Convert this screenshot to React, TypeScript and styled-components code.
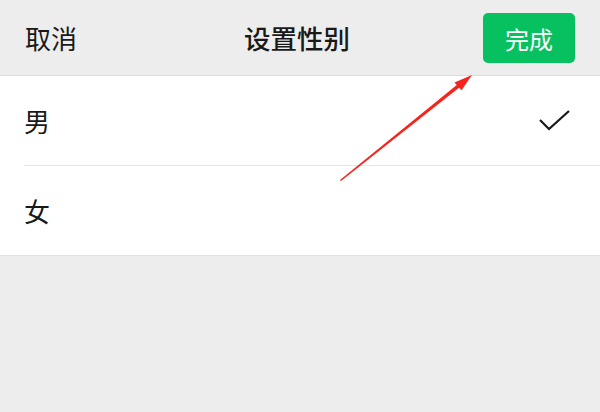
import { FC } from "react";
import styled, { createGlobalStyle } from "styled-components";

const GlobalStyle = createGlobalStyle`
  html, body {
    margin: 0;
    padding: 0;
    background: #ededed;
  }
  body {
    font-family: "Noto Sans CJK SC", "Noto Sans", sans-serif;
    color: #191919;
  }
`;

const Page = styled.div`
  position: relative;
  width: 600px;
  height: 412px;
  overflow: hidden;
  background: #ededed;
`;

const Header = styled.div`
  height: 75px;
  display: grid;
  grid-template-columns: 1fr auto 1fr;
  align-items: center;
  padding: 0 25px;
  border-bottom: 1px solid #dcdcdc;
`;

const Cancel = styled.div`
  font-size: 26px;
  justify-self: start;
`;

const Title = styled.div`
  font-size: 26.5px;
  font-weight: 500;
  margin-right: 6px;
`;

const DoneButton = styled.button`
  justify-self: end;
  width: 92px;
  height: 50px;
  margin-top: 1px;
  border: none;
  border-radius: 5px;
  background: #07c160;
  color: #fff;
  font-family: inherit;
  font-size: 24px;
  padding: 0;
`;

const List = styled.div`
  background: #fff;
  border-bottom: 1px solid #e2e2e2;
`;

const Row = styled.div<{ $divider?: boolean }>`
  height: 89px;
  margin-left: 24px;
  padding-right: 30px;
  display: flex;
  align-items: center;
  justify-content: space-between;
  font-size: 26px;
  border-top: ${(p) => (p.$divider ? "1px solid #e5e5e5" : "none")};
`;

const Annotation = styled.svg`
  position: absolute;
  left: 0;
  top: 0;
  pointer-events: none;
`;

const CheckIcon: FC = () => (
  <svg width="32" height="24" viewBox="0 0 32 24">
    <path d="M2 11 L11 20 L31 2" fill="none" stroke="#191919" strokeWidth="2.2" />
  </svg>
);

const App: FC = () => {
  return (
    <Page>
      <GlobalStyle />
      <Header>
        <Cancel>取消</Cancel>
        <Title>设置性别</Title>
        <DoneButton>完成</DoneButton>
      </Header>
      <List>
        <Row>
          男
          <CheckIcon />
        </Row>
        <Row $divider>女</Row>
      </List>
      <Annotation width="600" height="412">
        <polygon points="341,181 340,180 458,84 460,87" fill="#f5241c" />
        <polygon points="472,75 461.5,90.2 454.5,82.4" fill="#f5241c" />
      </Annotation>
    </Page>
  );
};

export default App;
